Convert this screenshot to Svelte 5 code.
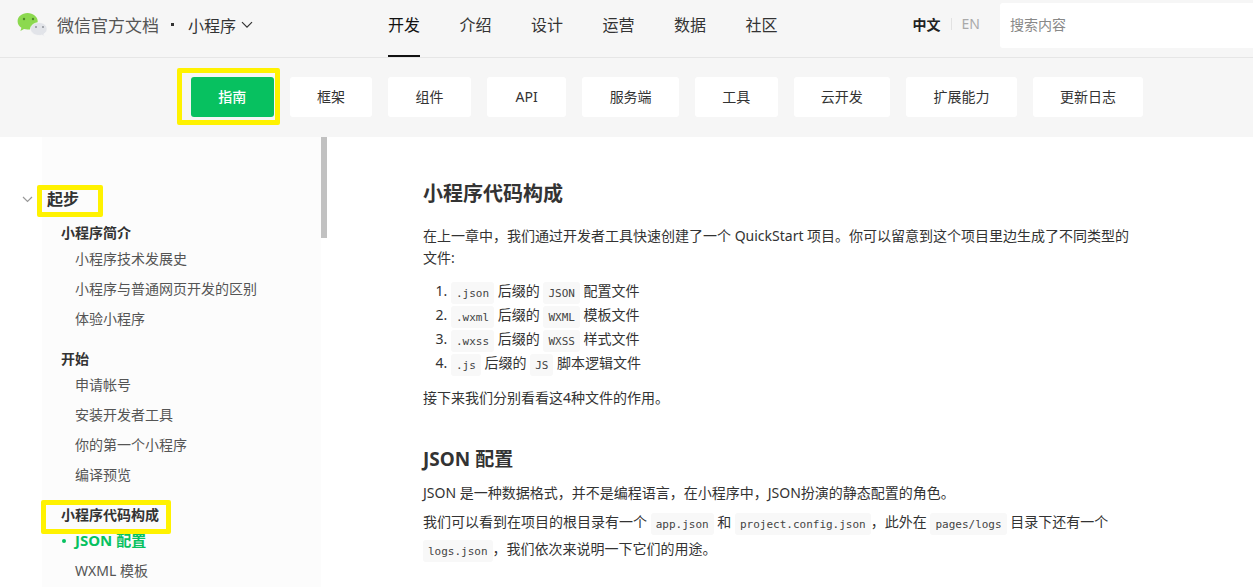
<script>
  const topNav = ['开发', '介绍', '设计', '运营', '数据', '社区'];
  const tabs = ['指南', '框架', '组件', 'API', '服务端', '工具', '云开发', '扩展能力', '更新日志'];
  const groups = [
    { title: '小程序简介', items: ['小程序技术发展史', '小程序与普通网页开发的区别', '体验小程序'] },
    { title: '开始', items: ['申请帐号', '安装开发者工具', '你的第一个小程序', '编译预览'] },
    { title: '小程序代码构成', marked: true, items: ['JSON 配置', 'WXML 模板'], active: 'JSON 配置' }
  ];
  const files = [
    ['.json', 'JSON', '配置文件'],
    ['.wxml', 'WXML', '模板文件'],
    ['.wxss', 'WXSS', '样式文件'],
    ['.js', 'JS', '脚本逻辑文件']
  ];
</script>

<div class="page">
  <header class="top">
    <div class="brand">
      <svg class="logo" width="32" height="26" viewBox="0 0 32 26" aria-hidden="true">
        <path d="M10.500 1C4.900 1 .6 4.600.6 9.300c0 2.700 1.400 4.800 3.800 6.500l-1 3.200 3.600-1.900c1.200.3 2.300.5 3.500.5 5.600 0 10.200-3.700 10.200-8.300S16.100 1 10.500 1z" fill="#8cd94f"/>
        <circle cx="7" cy="7" r="1.200" fill="#4d8a2b"/>
        <circle cx="16" cy="7" r="1.200" fill="#4d8a2b"/>
        <path d="M22.500 10.500c-4.700 0-9 2.800-9 6.500s4 6.500 8.700 6.500c1 0 1.800-.1 2.700-.4l2.600 1.300-.7-2.300c2-1.200 3.300-3 3.300-5.100 0-3.700-3.900-6.500-7.600-6.500z" fill="#e2e4e9" stroke="#f6f6f6" stroke-width=".8"/>
        <circle cx="19" cy="15" r="1" fill="#8e9298"/>
        <circle cx="26" cy="15" r="1" fill="#8e9298"/>
      </svg>
      <span class="site">微信官方文档</span>
      <span class="dot"></span>
      <span class="product">小程序</span>
      <svg class="caret" width="12" height="8" viewBox="0 0 12 8" aria-hidden="true"><path d="M1 1.200l5 5 5-5" fill="none" stroke="#333" stroke-width="1.200"/></svg>
    </div>
    <nav class="mainnav">
      {#each topNav as item, i}
        <a class="navitem" class:on={i === 0}>{item}</a>
      {/each}
    </nav>
    <div class="lang"><b>中文</b><i></i><span>EN</span></div>
    <div class="search">搜索内容</div>
  </header>

  <div class="tabs">
    {#each tabs as tab, i}
      <a class="tab" class:current={i === 0} class:latin={tab === 'API'}>{tab}</a>
    {/each}
  </div>

  <div class="body">
    <aside class="side">
      <div class="thumb"></div>
      <div class="head">
        <svg width="11" height="7" viewBox="0 0 11 7" aria-hidden="true"><path d="M1 1l4.500 4.500L10 1" fill="none" stroke="#999" stroke-width="1.200"/></svg>
        <strong>起步</strong>
      </div>
      {#each groups as g}
        <div class="group">
          <div class="gtitle">{g.title}</div>
          {#each g.items as item}
            <div class="item" class:active={item === g.active}>{item}</div>
          {/each}
        </div>
      {/each}
      <div class="mark m1"></div>
      <div class="mark m2"></div>
    </aside>

    <main class="content">
      <h1>小程序代码构成</h1>
      <p class="intro">在上一章中，我们通过开发者工具快速创建了一个 QuickStart 项目。你可以留意到这个项目里边生成了不同类型的文件:</p>
      <ol>
        {#each files as f}
          <li><code>{f[0]}</code> 后缀的 <code>{f[1]}</code> {f[2]}</li>
        {/each}
      </ol>
      <p class="next">接下来我们分别看看这4种文件的作用。</p>
      <h2>JSON 配置</h2>
      <p class="tight">JSON 是一种数据格式，并不是编程语言，在小程序中，JSON扮演的静态配置的角色。</p>
      <p class="tight loose">我们可以看到在项目的根目录有一个 <code>app.json</code> 和 <code>project.config.json</code>，此外在 <code>pages/logs</code> 目录下还有一个 <code>logs.json</code>，我们依次来说明一下它们的用途。</p>
    </main>
  </div>
  <div class="mark m0"></div>
</div>

<style>
  :global(body) { margin: 0; overflow: hidden; background: #fff; }
  .page {
    position: relative;
    width: 1253px;
    height: 587px;
    overflow: hidden;
    font-family: "Noto Sans", "Noto Sans CJK SC", sans-serif;
    color: #333;
    font-size: 14px;
  }
  .top {
    display: flex;
    align-items: center;
    height: 57px;
    background: #f6f6f6;
    border-bottom: 1px solid #e6e6e6;
  }
  .brand { display: flex; align-items: center; width: 388px; padding-left: 17px; box-sizing: border-box; margin-top: -8px; }
  .logo { margin-right: 8px; margin-top: 1px; }
  .site { font-size: 17px; color: #555; }
  .dot { width: 3px; height: 3px; background: #333; margin: 0 14px 0 12px; }
  .product { font-size: 16px; color: #333; }
  .caret { margin-left: 5px; }
  .mainnav { display: flex; gap: 39.500px; height: 57px; }
  .navitem { font-size: 16px; line-height: 50px; height: 57px; box-sizing: border-box; color: #333; }
  .navitem.on { color: #111; border-bottom: 2px solid #111; }
  .lang { margin-left: auto; display: flex; align-items: center; font-size: 14px; height: 48px; margin-top: -10px; }
  .lang b { color: #222; font-weight: 700; }
  .lang i { width: 1px; height: 12px; background: #e2e2e2; margin: 0 10px; }
  .lang span { color: #aaa; font-size: 14px; }
  .search {
    width: 253px; height: 45px; margin: -6px 0 0 20px; padding: 0 10px; box-sizing: border-box;
    background: #fff; border-radius: 3px 0 0 3px; color: #888; font-size: 14px; line-height: 43px;
  }
  .tabs {
    display: flex;
    gap: 16px;
    height: 79px;
    padding: 19px 0 0 191px;
    box-sizing: border-box;
    background: #f6f6f6;
  }
  .tab {
    height: 40px; line-height: 39px; padding: 0 27.300px; background: #fff; border-radius: 3px; color: #333; font-size: 14px;
  }
  .tab.latin { padding: 0 28.700px; }
  .tab.current { background: #07c160; color: #fff; font-weight: 500; }
  .body { display: flex; }
  .side {
    position: relative;
    width: 321px;
    height: 450px;
    padding-top: 50px;
    box-sizing: border-box;
    background: linear-gradient(to right, #fff 42px, #fcfcfc 42px);
    margin-right: 7px;
  }
  .thumb { position: absolute; left: 321px; top: 0; width: 6px; height: 101px; background: #c1c1c1; }
  .head { display: flex; align-items: center; height: 22px; padding-left: 22px; margin-bottom: 12px; }
  .head svg { margin-right: 14px; margin-top: 2px; }
  .head strong { font-size: 16px; font-weight: 700; color: #333; }
  .group { padding-left: 61px; margin-bottom: 13px; }
  .gtitle { font-size: 14px; font-weight: 700; line-height: 24px; height: 23px; color: #333; }
  .item { font-size: 14px; height: 30px; line-height: 30px; padding-left: 14px; color: #555; position: relative; }
  .item.active { color: #07c160; font-weight: 700; font-size: 15px; line-height: 28px; }
  .item.active::before {
    content: ""; position: absolute; left: 1px; top: 13px; width: 4px; height: 4px; border-radius: 50%; background: #07c160;
  }
  .mark { position: absolute; border: 5px solid #fff200; border-radius: 2px; box-sizing: border-box; }
  .m0 { left: 177px; top: 68px; width: 103px; height: 57px; }
  .m1 { left: 37px; top: 48px; width: 66px; height: 32px; }
  .m2 { left: 41px; top: 363px; width: 130px; height: 34px; }
  .content { width: 712px; padding: 43px 0 0 95px; font-size: 14px; color: #333; line-height: 22px; }
  h1 { font-size: 20px; font-weight: 700; line-height: 28px; margin: 0 0 17px; color: #333; }
  h2 { font-size: 19px; font-weight: 700; line-height: 26px; margin: 37px 0 10px; color: #333; }
  p { margin: 0; }
  .intro { margin-bottom: 10px; }
  ol { margin: 0 0 12px; padding-left: 28px; }
  li { height: 24px; line-height: 24px; }
  .tight { margin-bottom: 5px; }
  .loose { line-height: 25px; }
  code {
    font-family: "DejaVu Sans Mono", "Liberation Mono", monospace;
    font-size: 11px;
    color: #444;
    background: #f8f8f8;
    border-radius: 3px;
    padding: 4.500px 5px;
  }
</style>
